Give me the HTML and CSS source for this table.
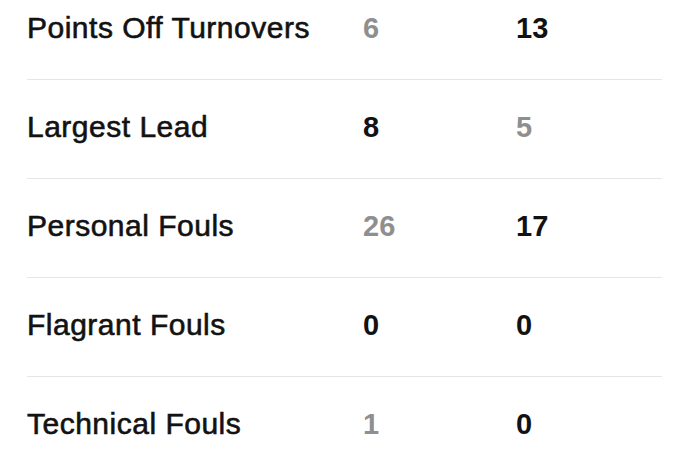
FILE: index.html
```html
<!DOCTYPE html>
<html>
<head>
<meta charset="utf-8">
<link rel="stylesheet" href="styles.css">
</head>
<body>
<div class="stats">
  <div class="row"><div class="label">Points Off Turnovers</div><div class="val dim">6</div><div class="val">13</div></div>
  <div class="row"><div class="label">Largest Lead</div><div class="val">8</div><div class="val dim">5</div></div>
  <div class="row"><div class="label">Personal Fouls</div><div class="val dim">26</div><div class="val">17</div></div>
  <div class="row"><div class="label">Flagrant Fouls</div><div class="val">0</div><div class="val">0</div></div>
  <div class="row"><div class="label">Technical Fouls</div><div class="val dim">1</div><div class="val">0</div></div>
</div>
</body>
</html>
```
FILE: styles.css
```css
html, body {
  margin: 0;
  padding: 0;
  background: #ffffff;
}
body {
  font-family: "Liberation Sans", Arial, sans-serif;
  color: #121212;
  overflow: hidden;
}
.stats {
  margin: -19px 0 0 27px;
  width: 635px;
}
.row {
  display: grid;
  grid-template-columns: 336px 153px 1fr;
  align-items: center;
  height: 94px;
  padding-bottom: 4px;
  border-bottom: 1px solid #e6e6e6;
}
.label {
  font-size: 30px;
  line-height: 36px;
  -webkit-text-stroke: 0.6px #121212;
  letter-spacing: 0.5px;
}
.val {
  font-size: 29px;
  line-height: 36px;
  font-weight: 700;
}
.val.dim {
  color: #8f8f8f;
}
.row:last-child {
  border-bottom: none;
}
```
